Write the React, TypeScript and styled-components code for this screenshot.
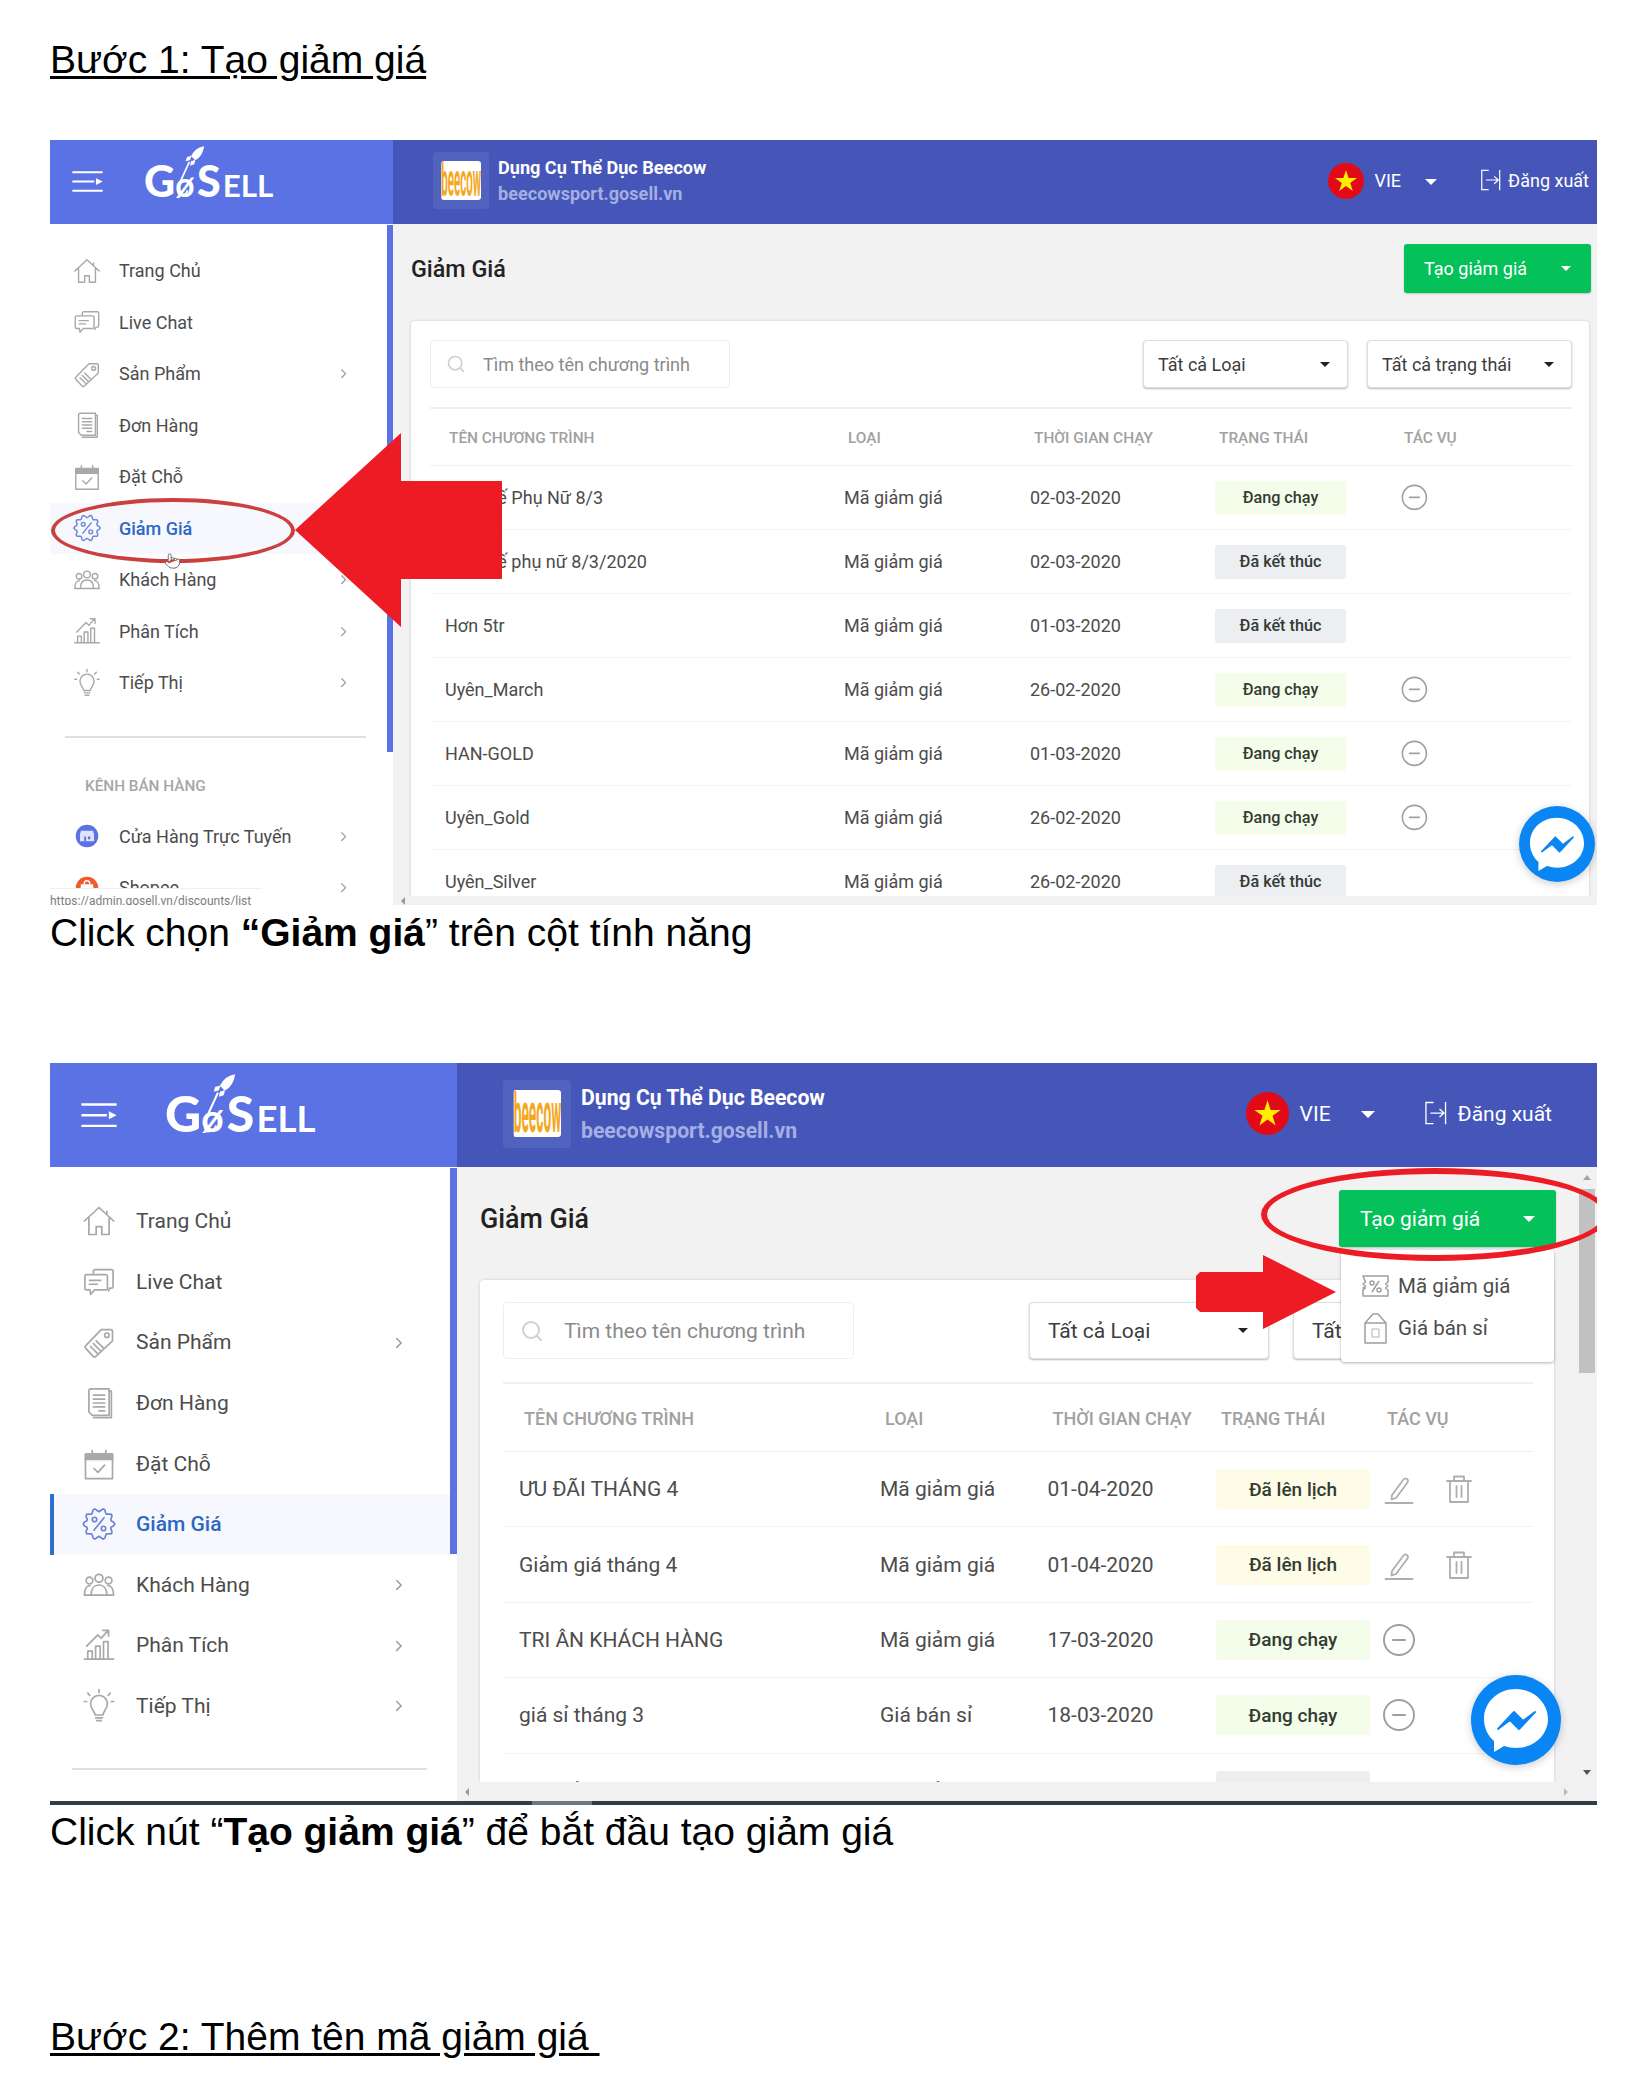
import React from 'react';
import styled, { createGlobalStyle, css } from 'styled-components';
import { ChevronRight, MinusCircle, Pointer, Search } from 'lucide-react';

const GlobalStyle = createGlobalStyle`
  html, body { margin: 0; padding: 0; background: #fff; }
  body { font-family: "Liberation Sans", Arial, sans-serif; color: #000; }
`;

const smallVars = css`
  --h: 765px; --head: 84px; --side: 343px; --band: 9px; --strip-w: 6px; --strip-h: 527px;
  --fs: 18px; --fs-title: 23.300px; --fs-badge: 16.200px; --fs-th: 15.400px; --fs-store: 18.100px;
  --pitch: 51.5px; --side-top: 21px; --side-pl: 22px; --side-pr: 42px; --ico: 30px; --ico-gap: 17px;
  --rule-top: 27px; --rule-x: 15px; --rule-w: 301px;
  --ham: 31px; --brand-pl: 22px; --brand-gap: 41px; --logo: 43px;
  --store-pl: 40px; --box-w: 56px; --box-h: 57px; --box-gap: 9px; --store-line: 26px;
  --flag: 36px; --flag-gap: 10px; --lang-gap: 24px; --out-gap: 43px; --out-ico: 21px; --out-ico-gap: 7px; --top-pr: 8px;
  --main-pl: 18px; --main-pt: 20px; --main-pr: 6px; --btn-w: 187px; --btn-h: 49px; --btn-pad: 20px; --card-gap: 28px; --card-mr: 2px;
  --card-pl: 19px; --card-pr: 17px; --card-pt: 19px; --search-w: 300px; --ctl-h: 48px; --sel-w: 205px; --sel-gap: 19px; --sel-pl: 14px; --sel-pr: 17px;
  --search-pl: 15px; --search-gap: 17px; --search-ico: 20px; --bar-gap: 19px;
  --th-h: 57px; --row: 64px; --badge-w: 131px; --badge-h: 34px; --act: 24px;
  --cols: 414px 186px 185px 185px 1fr; --cell-pl: 15px; --th-pl: 4px; --act-ml: 2px; --act-th: 4px;
`;

const bigVars = css`
  --h: 742px; --head: 104px; --side: 407px; --band: 19px; --strip-w: 7px; --strip-h: 386px;
  --fs: 21px; --fs-title: 26.800px; --fs-badge: 19px; --fs-th: 18px; --fs-store: 21.200px;
  --pitch: 60.6px; --side-top: 24px; --side-pl: 31px; --side-pr: 49px; --ico: 36px; --ico-gap: 19px;
  --rule-top: 32px; --rule-x: 22px; --rule-w: 355px;
  --ham: 36px; --brand-pl: 31px; --brand-gap: 48px; --logo: 50px;
  --store-pl: 46px; --box-w: 68px; --box-h: 68px; --box-gap: 10px; --store-line: 33px;
  --flag: 43px; --flag-gap: 11px; --lang-gap: 30px; --out-gap: 49px; --out-ico: 23px; --out-ico-gap: 11px; --top-pr: 45px;
  --main-pl: 23px; --main-pt: 23px; --main-pr: 20px; --btn-w: 217px; --btn-h: 57px; --btn-pad: 21px; --card-gap: 33px; --card-mr: 2px;
  --card-pl: 23px; --card-pr: 21px; --card-pt: 22px; --search-w: 351px; --ctl-h: 57px; --sel-w: 240px; --sel-gap: 24px; --sel-pl: 18px; --sel-pr: 20px;
  --search-pl: 16px; --search-gap: 20px; --search-ico: 24px; --bar-gap: 23px;
  --th-h: 68px; --row: 75.4px; --badge-w: 154px; --badge-h: 40px; --act: 30px;
  --cols: 377px 167.5px 168.5px 168px 1fr; --cell-pl: 16px; --th-pl: 5px; --act-ml: 0px; --act-th: 3px;
`;

const Page = styled.div`
  width: 1644px;
  height: 2100px;
  box-sizing: border-box;
  padding: 40px 47px 0 50px;
  overflow: hidden;
`;

const StepTitle = styled.h2`
  margin: ${p => p.$top || 0}px 0 60px;
  font-size: 39px;
  line-height: 40px;
  font-weight: 400;
  text-decoration: underline;
  text-underline-offset: 3px;
  white-space: pre;
`;

const Caption = styled.p`
  margin: ${p => p.$top}px 0 ${p => p.$bottom}px;
  font-size: 39px;
  line-height: 40px;
`;

const Shot = styled.div`
  ${p => (p.$big ? bigVars : smallVars)}
  position: relative;
  width: 1547px;
  height: var(--h);
  overflow: hidden;
  display: flex;
  flex-direction: column;
  font-family: Roboto, "Noto Sans", sans-serif;
  font-size: var(--fs);
  color: #4c4c4c;
`;

const TopBar = styled.header`
  flex: none;
  height: var(--head);
  display: flex;
  color: #fff;
`;

const Brand = styled.div`
  width: var(--side);
  display: flex;
  align-items: center;
  gap: var(--brand-gap);
  padding-left: var(--brand-pl);
  box-sizing: border-box;
  background: #5a72e4;
`;

const Hamburger = styled.svg`
  width: var(--ham);
  height: calc(var(--ham) * 0.68);
  flex: none;
`;

const Logo = styled.div`
  position: relative;
  display: flex;
  align-items: baseline;
  font-family: Lato, "Open Sans", sans-serif;
  font-weight: 900;
  font-size: var(--logo);
  line-height: 1;
  transform: translateY(-2px);
`;

const LogoSmall = styled.span`
  font-size: 0.73em;
  font-weight: 700;
  margin-left: 0.06em;
`;

const LogoO = styled.span`
  font-size: 0.78em;
  font-weight: 700;
  margin-right: 0.08em;
`;

const Rocket = styled.svg`
  position: absolute;
  left: 0.68em;
  top: -0.28em;
  width: 0.72em;
  height: 1.22em;
`;

const StoreBar = styled.div`
  flex: 1;
  display: flex;
  align-items: center;
  background: #4556b8;
  padding: 0 var(--top-pr) 3px var(--store-pl);
`;

const StoreBox = styled.div`
  width: var(--box-w);
  height: var(--box-h);
  flex: none;
  display: flex;
  align-items: center;
  justify-content: center;
  background: #5263bf;
  border-radius: 4px;
  margin-right: var(--box-gap);
`;

const StoreImage = styled.svg`
  width: 72%;
  height: 70%;
  border-radius: 3px;
`;

const StoreName = styled.div`
  font-size: var(--fs-store);
  font-weight: 700;
  line-height: var(--store-line);
`;

const StoreDomain = styled.div`
  font-size: var(--fs-store);
  font-weight: 700;
  line-height: var(--store-line);
  color: #a4afe2;
`;

const Flag = styled.svg`
  width: var(--flag);
  height: var(--flag);
  margin-left: auto;
  margin-right: var(--flag-gap);
  flex: none;
`;

const Caret = styled.i`
  flex: none;
  display: block;
  width: 0;
  height: 0;
  border-left: ${p => p.$size || 6}px solid transparent;
  border-right: ${p => p.$size || 6}px solid transparent;
  border-top: ${p => p.$size || 6}px solid ${p => p.$color || '#fff'};
`;

const LangCaret = styled(Caret)`
  margin: 2px var(--out-gap) 0 var(--lang-gap);
`;

const LogoutIcon = styled.svg`
  width: var(--out-ico);
  height: calc(var(--out-ico) * 1.05);
  margin-right: var(--out-ico-gap);
  flex: none;
`;

const Body = styled.div`
  flex: 1;
  min-height: 0;
  display: flex;
`;

const Sidebar = styled.nav`
  position: relative;
  width: var(--side);
  flex: none;
  box-sizing: border-box;
  padding-top: var(--side-top);
  background: #fff;
  overflow: hidden;
`;

const SideStrip = styled.div`
  position: absolute;
  top: 1px;
  right: 0;
  width: var(--strip-w);
  height: var(--strip-h);
  background: #5a72e4;
`;

const NavRow = styled.div`
  height: var(--pitch);
  display: flex;
  align-items: center;
  box-sizing: border-box;
  padding: 0 var(--side-pr) 0 var(--side-pl);
  gap: var(--ico-gap);
  ${p =>
    p.$active &&
    css`
      background: #f6f8fe;
      color: #2c67c4;
      font-weight: 500;
    `}
  ${p => p.$bar && css`box-shadow: inset 4px 0 #2f6fd0;`}
`;

const NavIcon = styled.svg`
  width: var(--ico);
  height: var(--ico);
  flex: none;
  fill: none;
  stroke: ${p => (p.$active ? '#6b84d6' : '#a8a8a8')};
  stroke-width: 1.5;
  stroke-linecap: round;
  stroke-linejoin: round;
`;

const NavArrow = styled(ChevronRight)`
  margin-left: auto;
  flex: none;
  color: #9c9c9c;
  width: calc(var(--fs) * 0.85);
  height: calc(var(--fs) * 0.85);
`;

const SideRule = styled.hr`
  margin: var(--rule-top) 0 0 var(--rule-x);
  width: var(--rule-w);
  height: 1px;
  border: 0;
  border-top: 2px solid #e0e0e0;
`;

const SideHeading = styled.div`
  margin: 37px 0 15px 35px;
  font-size: 15.300px;
  line-height: 20px;
  font-weight: 500;
  color: #a6a6a6;
`;

const StatusUrl = styled.div`
  position: absolute;
  left: 0;
  bottom: 0;
  width: 212px;
  height: 17px;
  overflow: hidden;
  background: #fff;
  font-size: 12px;
  line-height: 16px;
  padding-top: 4px;
  color: #7d7d7d;
  border-top: 1px solid #f0f0f0;
  box-sizing: border-box;
`;

const Main = styled.main`
  flex: 1;
  min-width: 0;
  display: flex;
  flex-direction: column;
  background: #f2f2f3;
`;

const MainRow = styled.div`
  flex: 1;
  min-height: 0;
  display: flex;
`;

const Content = styled.div`
  flex: 1;
  min-width: 0;
  display: flex;
  flex-direction: column;
  padding: var(--main-pt) var(--main-pr) 0 var(--main-pl);
`;

const TitleRow = styled.div`
  flex: none;
  height: var(--btn-h);
  display: flex;
  align-items: center;
  justify-content: space-between;
  margin-bottom: var(--card-gap);
`;

const Title = styled.h1`
  margin: 0;
  font-size: var(--fs-title);
  font-weight: 500;
  color: #222;
`;

const ButtonWrap = styled.div`
  position: relative;
`;

const CreateButton = styled.div`
  width: var(--btn-w);
  height: var(--btn-h);
  box-sizing: border-box;
  padding: 0 var(--btn-pad);
  display: flex;
  align-items: center;
  justify-content: space-between;
  background: #05c15a;
  color: #fff;
  border-radius: 3px;
  box-shadow: 0 1px 2px rgba(0, 0, 0, 0.2);
`;

const Menu = styled.div`
  position: absolute;
  top: calc(100% + 3px);
  left: 2px;
  width: 213px;
  height: 112px;
  box-sizing: border-box;
  padding-top: 15px;
  background: #fff;
  border-radius: 4px;
  box-shadow: 0 1px 3px rgba(0, 0, 0, 0.3);
  color: #4c4c4c;
  font-size: 20.5px;
`;

const MenuItem = styled.div`
  height: 42px;
  display: flex;
  align-items: center;
  gap: 8px;
  padding-left: 20px;
`;

const MenuIcon = styled.svg`
  width: 29px;
  height: 32px;
  flex: none;
  fill: none;
  stroke: #9e9e9e;
  stroke-width: 1.5;
  stroke-linejoin: round;
`;

const Card = styled.section`
  flex: 1;
  min-height: 0;
  overflow: hidden;
  margin-right: var(--card-mr);
  box-sizing: border-box;
  padding: var(--card-pt) var(--card-pr) 0 var(--card-pl);
  background: #fff;
  border-radius: 4px 4px 0 0;
  box-shadow: 0 0 3px rgba(0, 0, 0, 0.18);
`;

const Toolbar = styled.div`
  display: flex;
  align-items: center;
  gap: var(--sel-gap);
  padding-bottom: var(--bar-gap);
  border-bottom: 2px solid #f0f0f0;
`;

const SearchBox = styled.div`
  width: var(--search-w);
  height: var(--ctl-h);
  box-sizing: border-box;
  margin-right: auto;
  padding-left: var(--search-pl);
  display: flex;
  align-items: center;
  gap: var(--search-gap);
  border: 1px solid #eeeeee;
  border-radius: 4px;
  color: #8a8a8a;
`;

const SearchIcon = styled(Search)`
  width: var(--search-ico);
  height: var(--search-ico);
  color: #cfd0d6;
  flex: none;
`;

const SelectBox = styled.div`
  width: var(--sel-w);
  height: var(--ctl-h);
  box-sizing: border-box;
  padding: 0 var(--sel-pr) 0 var(--sel-pl);
  display: flex;
  align-items: center;
  justify-content: space-between;
  white-space: nowrap;
  background: #fff;
  border: 1px solid #dedede;
  border-radius: 4px;
  box-shadow: 0 1px 2px rgba(0, 0, 0, 0.28);
  color: #3c3c3c;
`;

const HeadRow = styled.div`
  height: var(--th-h);
  display: grid;
  grid-template-columns: var(--cols);
  align-items: center;
  border-bottom: 1px solid #f0f0f0;
  box-sizing: border-box;
  padding-top: 2px;
  font-size: var(--fs-th);
  font-weight: 500;
  color: #a1a1a1;
  white-space: nowrap;
`;

const HeadCell = styled.div`
  padding-left: ${p => (p.$first ? 'calc(var(--cell-pl) + var(--th-pl))' : p.$act ? 'var(--act-th)' : 'var(--th-pl)')};
`;

const DataRow = styled.div`
  height: var(--row);
  display: grid;
  grid-template-columns: var(--cols);
  align-items: center;
  border-bottom: 1px solid #f3f3f3;
  box-sizing: border-box;
  white-space: nowrap;
`;

const NameCell = styled.div`
  padding-left: var(--cell-pl);
`;

const Badge = styled.div`
  width: var(--badge-w);
  height: var(--badge-h);
  display: flex;
  align-items: center;
  justify-content: center;
  border-radius: 3px;
  font-size: var(--fs-badge);
  font-weight: 500;
  color: #333b33;
  background: ${p => ({ run: '#f3fde9', end: '#eceef2', plan: '#fefbe6' })[p.$kind]};
`;

const Actions = styled.div`
  display: flex;
  align-items: center;
  gap: var(--act);
  margin-left: var(--act-ml);
`;

const StopIcon = styled(MinusCircle)`
  width: calc(var(--act) * 1.2);
  height: calc(var(--act) * 1.2);
  margin-left: calc(var(--act) * -0.1);
  color: #9f9f9f;
`;

const ActionIcon = styled.svg`
  width: var(--act);
  height: var(--act);
  fill: none;
  stroke: #aeaeae;
  stroke-width: 1.8;
  stroke-linejoin: round;
  stroke-linecap: round;
`;

const Band = styled.div`
  flex: none;
  height: var(--band);
  display: flex;
  align-items: center;
  padding-left: 8px;
  background: #f1f1f1;
`;

const BandArrow = styled.i`
  width: 0;
  height: 0;
  border-top: 4px solid transparent;
  border-bottom: 4px solid transparent;
  ${p =>
    p.$right
      ? css`
          margin-left: auto;
          margin-right: 29px;
          border-left: 4px solid #bbb;
        `
      : css`
          border-right: 4px solid #999;
        `}
`;

const VScroll = styled.div`
  flex: none;
  width: 21px;
  display: flex;
  flex-direction: column;
  align-items: center;
  padding-top: 8px;
  box-sizing: border-box;
  background: #f1f1f1;
`;

const ScrollThumb = styled.div`
  width: 16px;
  height: 184px;
  margin-top: 9px;
  background: #c1c1c1;
`;

const ScrollTip = styled.i`
  width: 0;
  height: 0;
  border-left: 4px solid transparent;
  border-right: 4px solid transparent;
  ${p =>
    p.$down
      ? css`
          margin-top: auto;
          margin-bottom: 7px;
          border-top: 5px solid #555;
        `
      : css`
          border-bottom: 5px solid #a3a3a3;
        `}
`;

const DarkLine = styled.div`
  flex: none;
  height: 4px;
  background: linear-gradient(90deg, #2e3e45 482px, #6c7a80 482px, #6c7a80 542px, #2e3e45 542px);
`;

const Messenger = styled.svg`
  position: absolute;
  ${p =>
    p.$big
      ? css`
          left: 1421px;
          top: 612px;
          width: 90px;
          height: 90px;
        `
      : css`
          left: 1469px;
          top: 666px;
          width: 76px;
          height: 76px;
        `}
  filter: drop-shadow(0 2px 4px rgba(0, 0, 0, 0.2));
`;

const HandCursor = styled(Pointer)`
  position: absolute;
  left: 114px;
  top: 411px;
  width: 17px;
  height: 20px;
  color: #666;
  fill: #fff;
`;

const RingOne = styled.div`
  position: absolute;
  left: 1px;
  top: 358px;
  width: 244px;
  height: 65px;
  box-sizing: border-box;
  border: 4px solid #c9403f;
  border-radius: 50%;
`;

const RingTwo = styled.div`
  position: absolute;
  left: 1211px;
  top: 105px;
  width: 348px;
  height: 93px;
  box-sizing: border-box;
  border: 6px solid #ed1c24;
  border-radius: 50%;
`;

const ArrowOne = styled.svg`
  position: absolute;
  left: 245px;
  top: 293px;
  width: 207px;
  height: 194px;
`;

const ArrowTwo = styled.svg`
  position: absolute;
  left: 1146px;
  top: 192px;
  width: 140px;
  height: 74px;
`;

const scallop = (() => {
  const pts: string[] = [];
  for (let i = 0; i < 48; i++) {
    const a = (i / 48) * Math.PI * 2;
    const r = 12.5 + 1.6 * Math.cos(a * 10);
    pts.push(`${(16 + r * Math.cos(a)).toFixed(1)},${(16 + r * Math.sin(a)).toFixed(1)}`);
  }
  return pts.join(' ');
})();

const iconPaths: Record<string, React.ReactNode> = {
  home: <path d="M3 16 16 4l13 12M7 13.5V28h6.5v-7h5v7H25V13.5M23 7.5V10" />,
  chat: (
    <>
      <path d="M11 9V6.5A1.5 1.5 0 0 1 12.500 5H27a1.500 1.500 0 0 1 1.500 1.500V20a1.500 1.500 0 0 1-1.500 1.500h-1.500l-1 2.500" />
      <path d="M5 9.500h17a1.500 1.500 0 0 1 1.500 1.500v10.500a1.500 1.500 0 0 1-1.500 1.500H12l-3.500 4-.5-4H5A1.500 1.500 0 0 1 3.500 21.500V11A1.500 1.500 0 0 1 5 9.500Z" />
      <path d="M7.500 14.500h10M7.500 18h7" />
    </>
  ),
  tag: (
    <>
      <path d="M18 5h8.500A1.500 1.500 0 0 1 28 6.500V15L13 29a1.500 1.500 0 0 1-2 0L4 21.500a1.500 1.500 0 0 1 0-2Z" />
      <circle cx="23" cy="10" r="2" />
      <path d="m8.500 20 6.500 6.500M11 17.500l6.500 6.500M13.500 15l6.500 6.500" />
    </>
  ),
  order: (
    <>
      <path d="M9 3.500h16V27H10l-3-3V5.500A2 2 0 0 1 9 3.500Z" />
      <path d="M25 5.500h2V29H11M11 9h10M11 12.500h10M11 16h10M11 19.500h10M16 23h5" />
    </>
  ),
  booking: (
    <>
      <path d="M4 7h24v22H4Z" />
      <path d="M4 8h24v4H4Z" fill="#a8a8a8" />
      <path d="M10 4v5M22 4v5M11.500 20l3.500 3.500 6-6.500" />
    </>
  ),
  sale: (
    <>
      <polygon points={scallop} />
      <path d="m20.500 10.500-9 11" />
      <circle cx="12" cy="12" r="2" />
      <circle cx="20" cy="20" r="2" />
    </>
  ),
  customer: (
    <>
      <circle cx="16" cy="10" r="3.500" />
      <circle cx="7.500" cy="12" r="3" />
      <circle cx="24.500" cy="12" r="3" />
      <path d="M9 25c0-6 3-9 7-9s7 3 7 9Z" />
      <path d="M9 25H3c0-5 2-8.500 5-8.500M23 25h6c0-5-2-8.500-5-8.500" />
    </>
  ),
  chart: (
    <>
      <path d="M3 28.500h26M6 27.500v-6h4v6M13 27.500V17h4v10.500M20 27.500V13h4v14.500" />
      <path d="m5 17 10-10 3 3 6-7M19.500 3H24.500V8" />
    </>
  ),
  bulb: (
    <>
      <path d="M12.500 24c0-3-4-5-4-10a7.500 7.500 0 0 1 15 0c0 5-4 7-4 10ZM13 26.500h6M14 29h4" />
      <path d="M16 1.500v2.500M6 4.500l1.800 2M26 4.500l-1.800 2M3 12h2M27 12h2" />
    </>
  ),
};

const ShopIcon = () => (
  <NavIcon viewBox="0 0 32 32" style={{ stroke: 'none' }}>
    <circle cx="16" cy="16" r="12" fill="#5a72e4" />
    <path d="M9.500 10.500h13l1 4v7h-15v-7Z" fill="#dfe4fa" />
    <path d="M13 16.500h2v5h-2ZM17 16.500h2.500v3H17Z" fill="#5a72e4" />
  </NavIcon>
);

const ShopeeIcon = () => (
  <NavIcon viewBox="0 0 32 32" style={{ stroke: 'none' }}>
    <circle cx="16" cy="16" r="12" fill="#ee5b2c" />
    <path d="M9.500 12h13l1 11h-15Z" fill="#fff" />
    <path d="M13 12c0-5 6-5 6 0" stroke="#fff" strokeWidth="1.500" fill="none" />
  </NavIcon>
);

type NavItem = { icon: string; label: string; more?: boolean };

const navItems: NavItem[] = [
  { icon: 'home', label: 'Trang Chủ' },
  { icon: 'chat', label: 'Live Chat' },
  { icon: 'tag', label: 'Sản Phẩm', more: true },
  { icon: 'order', label: 'Đơn Hàng' },
  { icon: 'booking', label: 'Đặt Chỗ' },
  { icon: 'sale', label: 'Giảm Giá' },
  { icon: 'customer', label: 'Khách Hàng', more: true },
  { icon: 'chart', label: 'Phân Tích', more: true },
  { icon: 'bulb', label: 'Tiếp Thị', more: true },
];

type Discount = { name: string; type: string; date: string; status: 'run' | 'end' | 'plan' };

const statusText = { run: 'Đang chạy', end: 'Đã kết thúc', plan: 'Đã lên lịch' };

const firstRows: Discount[] = [
  { name: 'Quốc tế Phụ Nữ 8/3', type: 'Mã giảm giá', date: '02-03-2020', status: 'run' },
  { name: 'Quốc tế phụ nữ 8/3/2020', type: 'Mã giảm giá', date: '02-03-2020', status: 'end' },
  { name: 'Hơn 5tr', type: 'Mã giảm giá', date: '01-03-2020', status: 'end' },
  { name: 'Uyên_March', type: 'Mã giảm giá', date: '26-02-2020', status: 'run' },
  { name: 'HAN-GOLD', type: 'Mã giảm giá', date: '01-03-2020', status: 'run' },
  { name: 'Uyên_Gold', type: 'Mã giảm giá', date: '26-02-2020', status: 'run' },
  { name: 'Uyên_Silver', type: 'Mã giảm giá', date: '26-02-2020', status: 'end' },
];

const secondRows: Discount[] = [
  { name: 'ƯU ĐÃI THÁNG 4', type: 'Mã giảm giá', date: '01-04-2020', status: 'plan' },
  { name: 'Giảm giá tháng 4', type: 'Mã giảm giá', date: '01-04-2020', status: 'plan' },
  { name: 'TRI ÂN KHÁCH HÀNG', type: 'Mã giảm giá', date: '17-03-2020', status: 'run' },
  { name: 'giá sỉ tháng 3', type: 'Giá bán sỉ', date: '18-03-2020', status: 'run' },
  { name: 'mã giảm giá', type: 'Mã giảm giá', date: '17-03-2020', status: 'end' },
];

function RowActions({ status }: { status: Discount['status'] }) {
  if (status === 'end') return <div />;
  if (status === 'run')
    return (
      <Actions>
        <StopIcon strokeWidth={1.3} />
      </Actions>
    );
  return (
    <Actions>
      <ActionIcon viewBox="0 0 30 30">
        <path d="M8 21 19.500 5.500a2.500 2.500 0 0 1 4 3L12 24l-4.500 1.500ZM1.500 29h27" />
      </ActionIcon>
      <ActionIcon viewBox="0 0 30 30">
        <path d="M3 7h24M10 7V2.500h10V7M6 7v21h18V7M12.500 12v11M17.500 12v11" />
      </ActionIcon>
    </Actions>
  );
}

function AppShot({ big, rows, children }: { big?: boolean; rows: Discount[]; children?: React.ReactNode }) {
  return (
    <Shot $big={big}>
      <TopBar>
        <Brand>
          <Hamburger viewBox="0 0 36 25">
            <path d="M0 1.500h36M0 12.500h26M0 23.500h36" stroke="#fff" strokeWidth="2.500" />
            <path d="M28 8.500v8l8-4Z" fill="#fff" />
          </Hamburger>
          <Logo>
            G<LogoO>ø</LogoO>S<LogoSmall>ELL</LogoSmall>
            <Rocket viewBox="0 0 36 60" fill="none" stroke="#fff" strokeWidth="1.800">
              <path d="M35 1c-6 1-10 5-13 10l4 4c5-3 8-8 9-14Z" fill="#fff" />
              <path d="m21 12-4 1-1 3 4-1M25 16l-1 4-3 1 1-4" fill="#fff" />
              <path d="M19 18 8 42c-3 7-3 14 1 15 4 0 7-3 8-6" strokeWidth="2" />
            </Rocket>
          </Logo>
        </Brand>
        <StoreBar>
          <StoreBox>
            <StoreImage viewBox="0 0 40 40">
              <rect width="40" height="40" fill="#fff" />
              <text
                x="0"
                y="35"
                textLength="40"
                lengthAdjust="spacingAndGlyphs"
                fontFamily="Roboto, sans-serif"
                fontWeight="700"
                fontSize="46"
                fill="#f5a81f"
              >
                beecow
              </text>
            </StoreImage>
          </StoreBox>
          <div>
            <StoreName>Dụng Cụ Thể Dục Beecow</StoreName>
            <StoreDomain>beecowsport.gosell.vn</StoreDomain>
          </div>
          <Flag viewBox="0 0 36 36">
            <circle cx="18" cy="18" r="18" fill="#e30a17" />
            <polygon points="18,7 20.600,15 29,15 22.200,19.900 24.800,28 18,23 11.200,28 13.800,19.900 7,15 15.400,15" fill="#ffee00" />
          </Flag>
          <span>VIE</span>
          <LangCaret $size={big ? 7 : 6} />
          <LogoutIcon viewBox="0 0 22 24" fill="none" stroke="#fff" strokeWidth="1.300">
            <path d="M9 1.500H1.500v21H9M6 12h13M15 8l4.500 4-4.500 4M21 1v22" />
          </LogoutIcon>
          <span>Đăng xuất</span>
        </StoreBar>
      </TopBar>
      <Body>
        <Sidebar>
          {navItems.map(item => (
            <NavRow key={item.label} $active={item.icon === 'sale'} $bar={big && item.icon === 'sale'}>
              <NavIcon viewBox="0 0 32 32" $active={item.icon === 'sale'}>
                {iconPaths[item.icon]}
              </NavIcon>
              {item.label}
              {item.more && <NavArrow strokeWidth={2} />}
            </NavRow>
          ))}
          <SideRule />
          <SideHeading>KÊNH BÁN HÀNG</SideHeading>
          <NavRow>
            <ShopIcon />
            Cửa Hàng Trực Tuyến
            <NavArrow strokeWidth={2} />
          </NavRow>
          <NavRow>
            <ShopeeIcon />
            Shopee
            <NavArrow strokeWidth={2} />
          </NavRow>
          <SideStrip />
        </Sidebar>
        <Main>
          <MainRow>
            <Content>
              <TitleRow>
                <Title>Giảm Giá</Title>
                <ButtonWrap>
                  <CreateButton>
                    Tạo giảm giá
                    <Caret $size={big ? 6 : 5} />
                  </CreateButton>
                  {big && (
                    <Menu>
                      <MenuItem>
                        <MenuIcon viewBox="0 0 29 32">
                          <path d="M2 6h25v6l-2.500 2 2.500 2-2.500 2 2.500 2v6H2v-6l2.500-2L2 18l2.500-2L2 14l2.500-2Z" />
                          <path d="m18 11-7 11" />
                          <circle cx="11" cy="13" r="2" />
                          <circle cx="18" cy="20" r="2" />
                        </MenuIcon>
                        Mã giảm giá
                      </MenuItem>
                      <MenuItem>
                        <MenuIcon viewBox="0 0 29 32">
                          <path d="M4 11h21v20H4ZM4 11l8-9M25 11l-8-9h-5" />
                          <path d="M11 17h7v8h-7Z" strokeWidth="0.800" />
                        </MenuIcon>
                        Giá bán sỉ
                      </MenuItem>
                    </Menu>
                  )}
                </ButtonWrap>
              </TitleRow>
              <Card>
                <Toolbar>
                  <SearchBox>
                    <SearchIcon strokeWidth={2} />
                    Tìm theo tên chương trình
                  </SearchBox>
                  <SelectBox>
                    Tất cả Loại
                    <Caret $size={5} $color="#222" />
                  </SelectBox>
                  <SelectBox>
                    Tất cả trạng thái
                    <Caret $size={5} $color="#222" />
                  </SelectBox>
                </Toolbar>
                <HeadRow>
                  <HeadCell $first>TÊN CHƯƠNG TRÌNH</HeadCell>
                  <HeadCell>LOẠI</HeadCell>
                  <HeadCell>THỜI GIAN CHẠY</HeadCell>
                  <HeadCell>TRẠNG THÁI</HeadCell>
                  <HeadCell $act>TÁC VỤ</HeadCell>
                </HeadRow>
                {rows.map(row => (
                  <DataRow key={row.name}>
                    <NameCell>{row.name}</NameCell>
                    <div>{row.type}</div>
                    <div>{row.date}</div>
                    <Badge $kind={row.status}>{statusText[row.status]}</Badge>
                    <RowActions status={row.status} />
                  </DataRow>
                ))}
              </Card>
            </Content>
            {big && (
              <VScroll>
                <ScrollTip />
                <ScrollThumb />
                <ScrollTip $down />
              </VScroll>
            )}
          </MainRow>
          <Band>
            <BandArrow />
            {big && <BandArrow $right />}
          </Band>
        </Main>
      </Body>
      {big && <DarkLine />}
      {children}
      <Messenger $big={big} viewBox="0 0 90 90">
        <circle cx="45" cy="45" r="45" fill="#0a86f4" />
        <path d="M45 14c-18 0-32 13-32 30 0 9 4 17 10 22v11l10-6c4 1 8 2 12 2 18 0 32-13 32-29S63 14 45 14Z" fill="#fff" />
        <path d="m27 54 16-17 9 9 12-9-16 17-9-9Z" fill="#0a86f4" stroke="#0a86f4" strokeWidth="2" strokeLinejoin="round" />
      </Messenger>
    </Shot>
  );
}

export default function App() {
  return (
    <Page>
      <GlobalStyle />
      <StepTitle>Bước 1: Tạo giảm giá</StepTitle>
      <AppShot rows={firstRows}>
        <StatusUrl>https://admin.gosell.vn/discounts/list</StatusUrl>
        <RingOne />
        <HandCursor strokeWidth={1.3} />
        <ArrowOne viewBox="0 0 207 194">
          <polygon points="0,97 106,0 106,48 207,48 207,146 106,146 106,194" fill="#ed1c24" />
        </ArrowOne>
      </AppShot>
      <Caption $top={8} $bottom={110}>
        Click chọn <b>“Giảm giá</b>” trên cột tính năng
      </Caption>
      <AppShot big rows={secondRows}>
        <RingTwo />
        <ArrowTwo viewBox="0 0 140 74">
          <polygon points="4,17 67,17 67,0 140,37 67,74 67,57 4,57 0,53 0,21" fill="#ed1c24" />
        </ArrowTwo>
      </AppShot>
      <Caption $top={7} $bottom={165}>
        Click nút “<b>Tạo giảm giá</b>” để bắt đầu tạo giảm giá
      </Caption>
      <StepTitle>{'Bước 2: Thêm tên mã giảm giá '}</StepTitle>
    </Page>
  );
}
